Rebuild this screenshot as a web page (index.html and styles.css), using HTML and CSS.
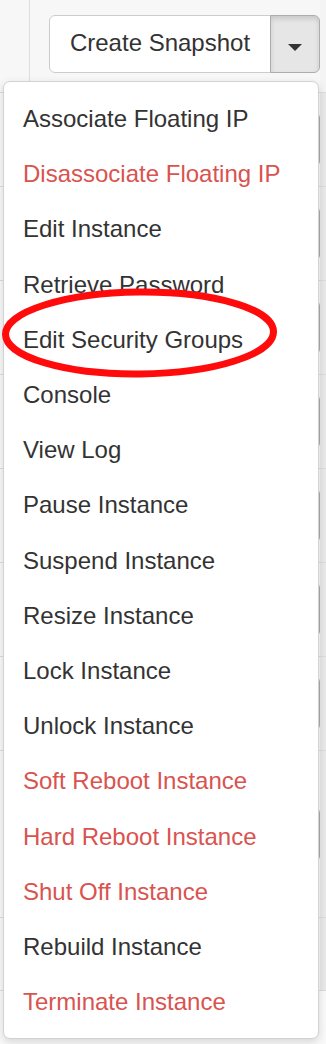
FILE: index.html
```html
<!DOCTYPE html>
<html lang="en">
<head>
    <meta charset="UTF-8">
    <title>Instances</title>
    <link rel="stylesheet" href="styles.css">
</head>
<body>
    <div class="table">
        <div class="row row-first">
            <div class="cell-check"></div>
            <div class="cell-actions">
                <div class="btn-group">
                    <button class="btn btn-main">Create Snapshot</button>
                    <button class="btn btn-toggle"><span class="caret"></span></button>
                </div>
            </div>
            <div class="cell-edge"></div>
        </div>
        <!-- rows below are covered by the open menu, only their button edge shows -->
        <div class="row">
            <div class="cell-check"></div>
            <div class="cell-actions"><div class="btn-group"><span class="btn btn-main"></span><span class="btn btn-toggle"></span></div></div>
            <div class="cell-edge"></div>
        </div>
        <div class="row">
            <div class="cell-check"></div>
            <div class="cell-actions"><div class="btn-group"><span class="btn btn-main"></span><span class="btn btn-toggle"></span></div></div>
            <div class="cell-edge"></div>
        </div>
        <div class="row">
            <div class="cell-check"></div>
            <div class="cell-actions"><div class="btn-group"><span class="btn btn-main"></span><span class="btn btn-toggle"></span></div></div>
            <div class="cell-edge"></div>
        </div>
        <div class="row">
            <div class="cell-check"></div>
            <div class="cell-actions"><div class="btn-group"><span class="btn btn-main"></span><span class="btn btn-toggle"></span></div></div>
            <div class="cell-edge"></div>
        </div>
        <div class="row">
            <div class="cell-check"></div>
            <div class="cell-actions"><div class="btn-group"><span class="btn btn-main"></span><span class="btn btn-toggle"></span></div></div>
            <div class="cell-edge"></div>
        </div>
        <div class="row">
            <div class="cell-check"></div>
            <div class="cell-actions"><div class="btn-group"><span class="btn btn-main"></span><span class="btn btn-toggle"></span></div></div>
            <div class="cell-edge"></div>
        </div>
        <div class="row">
            <div class="cell-check"></div>
            <div class="cell-actions"><div class="btn-group"><span class="btn btn-main"></span><span class="btn btn-toggle"></span></div></div>
            <div class="cell-edge"></div>
        </div>
        <div class="row row-tall">
            <div class="cell-check"></div>
            <div class="cell-actions"><div class="btn-group"><span class="btn btn-main"></span><span class="btn btn-toggle"></span></div></div>
            <div class="cell-edge"></div>
        </div>
        <div class="row row-short">
            <div class="cell-check"></div>
            <div class="cell-actions"></div>
            <div class="cell-edge"></div>
        </div>
    </div>

    <!-- menu opened from the caret of the first row -->
    <ul class="dropdown-menu">
        <li><a href="">Associate Floating IP</a></li>
        <li><a href="" class="danger">Disassociate Floating IP</a></li>
        <li><a href="">Edit Instance</a></li>
        <li><a href="">Retrieve Password</a></li>
        <li><a href="">Edit Security Groups</a></li>
        <li><a href="">Console</a></li>
        <li><a href="">View Log</a></li>
        <li><a href="">Pause Instance</a></li>
        <li><a href="">Suspend Instance</a></li>
        <li><a href="">Resize Instance</a></li>
        <li><a href="">Lock Instance</a></li>
        <li><a href="">Unlock Instance</a></li>
        <li><a href="" class="danger">Soft Reboot Instance</a></li>
        <li><a href="" class="danger">Hard Reboot Instance</a></li>
        <li><a href="" class="danger">Shut Off Instance</a></li>
        <li><a href="">Rebuild Instance</a></li>
        <li><a href="" class="danger">Terminate Instance</a></li>
    </ul>

    <svg class="mark" width="286" height="100" viewBox="0 0 286 100">
        <ellipse cx="139.5" cy="47" rx="134" ry="41" fill="none" stroke="#ff0b0b" stroke-width="7" transform="rotate(-0.6 139.5 47)"/>
    </svg>
</body>
</html>
```

FILE: styles.css
```css
*{
    box-sizing: border-box;
}
body{
    margin: 0;
    background: #f9f9f9;
    font-family: "Liberation Sans", Arial, Helvetica, sans-serif;
    color: #333;
    height: 1044px;
    overflow: hidden;
}
.table{
    display: flex;
    flex-direction: column;
}
.row{
    display: flex;
    align-items: stretch;
    height: 94px;
    border-bottom: 1px solid #dcdcdc;
}
.row-first{
    height: 93px;
    background: #f7f7f7;
}
.row-tall{
    height: 167px;
}
.row-short{
    height: 73px;
}
.cell-check{
    width: 30px;
    border-right: 1px solid #dedede;
}
.cell-actions{
    flex: 1;
    display: flex;
    align-items: center;
    justify-content: flex-end;
}
.row-first .cell-actions{
    align-items: flex-start;
    padding-top: 15px;
}
.cell-edge{
    width: 6px;
    background: #e9e9e9;
}
.row-first .cell-edge{
    background: #f4f4f4;
}
.btn-group{
    display: flex;
    height: 55px;
    border-right: 2px solid #ababab;
    border-radius: 6px;
}
.row-first .btn-group{
    height: 58px;
    border-right: none;
}
.btn{
    display: block;
    font-family: inherit;
    font-size: 24px;
    color: #333;
    background: #fff;
    border: 1px solid #ccc;
    margin: 0;
    cursor: pointer;
}
.btn-main{
    width: 222px;
    border-radius: 6px 0 0 6px;
    padding: 0 0 2px;
}
.btn-toggle{
    width: 50px;
    margin-left: -1px;
    border-radius: 0 6px 6px 0;
    background: #e6e6e6;
    border-color: #adadad;
    box-shadow: inset 0 3px 5px rgba(0,0,0,.125);
    display: flex;
    align-items: center;
    justify-content: center;
    padding: 7px 0 0;
}
.caret{
    display: block;
    width: 0;
    height: 0;
    border-top: 7px solid #333;
    border-left: 7px solid transparent;
    border-right: 7px solid transparent;
}
.dropdown-menu{
    position: absolute;
    top: 81px;
    left: 3px;
    width: 316px;
    margin: 0;
    padding: 9px 0;
    list-style: none;
    background: #fff;
    border: 1px solid #d2d2d2;
    border-radius: 7px;
    box-shadow: 0 3px 9px rgba(0,0,0,.14);
}
.dropdown-menu a{
    display: block;
    padding: 0 19px;
    line-height: 55.2px;
    font-size: 24px;
    color: #333;
    text-decoration: none;
    white-space: nowrap;
}
.dropdown-menu a.danger{
    color: #d9534f;
}
.mark{
    position: absolute;
    left: 0;
    top: 286px;
}
```
